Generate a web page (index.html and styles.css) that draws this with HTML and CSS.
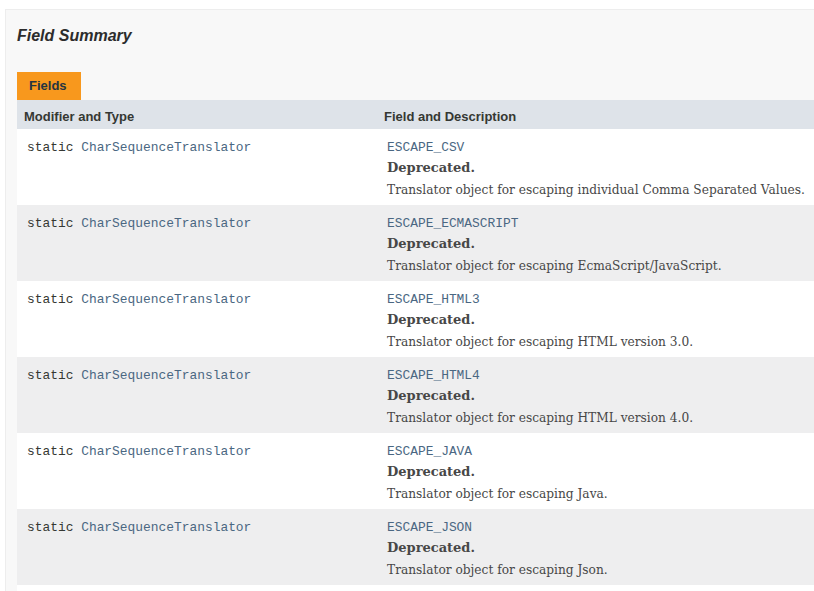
FILE: index.html
```html
<!DOCTYPE html>
<html>
<head>
<meta charset="utf-8">
<link rel="stylesheet" href="styles.css">
</head>
<body>
<div class="summary">
  <h3 class="title">Field Summary</h3>
  <div class="caption"><span>Fields</span></div>
  <table class="fields">
    <thead>
      <tr><th class="c1">Modifier and Type</th><th class="c2">Field and Description</th></tr>
    </thead>
    <tbody>
      <tr class="alt0"><td class="c1"><code>static <a>CharSequenceTranslator</a></code></td><td class="c2"><code><a>ESCAPE_CSV</a></code><div class="dep">Deprecated.</div><div class="desc">Translator object for escaping individual Comma Separated Values.</div></td></tr>
      <tr class="alt1"><td class="c1"><code>static <a>CharSequenceTranslator</a></code></td><td class="c2"><code><a>ESCAPE_ECMASCRIPT</a></code><div class="dep">Deprecated.</div><div class="desc">Translator object for escaping EcmaScript/JavaScript.</div></td></tr>
      <tr class="alt0"><td class="c1"><code>static <a>CharSequenceTranslator</a></code></td><td class="c2"><code><a>ESCAPE_HTML3</a></code><div class="dep">Deprecated.</div><div class="desc">Translator object for escaping HTML version 3.0.</div></td></tr>
      <tr class="alt1"><td class="c1"><code>static <a>CharSequenceTranslator</a></code></td><td class="c2"><code><a>ESCAPE_HTML4</a></code><div class="dep">Deprecated.</div><div class="desc">Translator object for escaping HTML version 4.0.</div></td></tr>
      <tr class="alt0"><td class="c1"><code>static <a>CharSequenceTranslator</a></code></td><td class="c2"><code><a>ESCAPE_JAVA</a></code><div class="dep">Deprecated.</div><div class="desc">Translator object for escaping Java.</div></td></tr>
      <tr class="alt1"><td class="c1"><code>static <a>CharSequenceTranslator</a></code></td><td class="c2"><code><a>ESCAPE_JSON</a></code><div class="dep">Deprecated.</div><div class="desc">Translator object for escaping Json.</div></td></tr>
      <tr class="alt0 tail"><td class="c1"></td><td class="c2"></td></tr>
    </tbody>
  </table>
</div>
</body>
</html>
```
FILE: styles.css
```css
html, body {
  margin: 0;
  padding: 0;
  background: #ffffff;
  overflow: hidden;
  height: 591px;
}
.summary {
  margin: 9px 0 0 5px;
  width: 840px;
  background: #f8f8f8;
  border: 1px solid #ededed;
  padding: 0 0 20px 11px;
  font-family: "Liberation Sans", Arial, sans-serif;
}
.title {
  margin: 0;
  padding-top: 17px;
  height: 45px;
  font-size: 16px;
  line-height: 18px;
  font-style: italic;
  font-weight: bold;
  color: #2c2c2c;
}
.caption {
  display: flex;
}
.caption span {
  background: #f8981d;
  color: #253441;
  font-weight: bold;
  font-size: 13px;
  line-height: 18px;
  padding: 5px 12px 5px 12px;
  width: 40px;
}
.fields {
  border-collapse: collapse;
  border-spacing: 0;
  width: 829px;
}
.fields th {
  background: #dee3e9;
  color: #353833;
  text-align: left;
  font-size: 13px;
  font-weight: bold;
  line-height: 17px;
  padding: 8px 3px 4px 7px;
}
.fields th.c1 {
  width: 350px;
}
.fields td {
  vertical-align: top;
  padding: 6px 3px 4px 10px;
  line-height: 22px;
}
.fields tr.alt0 td { background: #ffffff; }
.fields tr.alt1 td { background: #eeeeef; }
.fields tr.tail td { height: 20px; padding: 0; }
code {
  font-family: "Liberation Mono", "DejaVu Sans Mono", monospace;
  font-size: 12.9px;
  color: #353833;
  display: block;
  height: 22px;
  padding-top: 2px;
  box-sizing: border-box;
}
code a {
  color: #4a6782;
  text-decoration: none;
}
.dep {
  font-family: "DejaVu Serif", Georgia, serif;
  font-weight: bold;
  font-size: 13px;
  color: #474747;
}
.desc {
  font-family: "DejaVu Serif", Georgia, serif;
  font-size: 12.2px;
  color: #474747;
}
```
